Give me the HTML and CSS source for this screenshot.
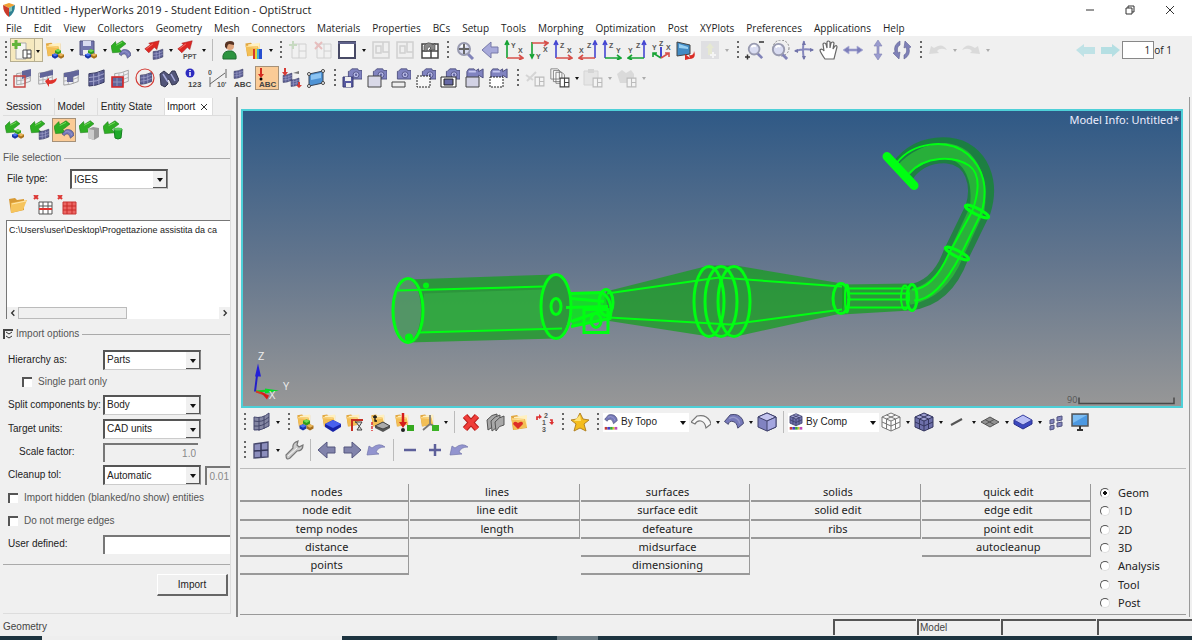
FILE: index.html
```html
<!DOCTYPE html>
<html lang="en">
<head>
<meta charset="utf-8">
<title>Untitled - HyperWorks 2019 - Student Edition - OptiStruct</title>
<link rel="stylesheet" href="styles.css">
</head>
<body>
<svg class="sprite" aria-hidden="true">
  <!-- shared parts -->
  <symbol id="p-folder" viewBox="0 0 20 20"><path d="M1 4l6-1 2 2 8-1v12L3 18z" fill="#e0a640"/><path d="M4 5l13-2v12L4 17z" fill="#fff0c0"/><path d="M1 6l14 1 2 8-13 3z" fill="#f3bf55"/><path d="M2 7l12 1" stroke="#ffe19a"/></symbol>
  <symbol id="p-cubes" viewBox="0 0 20 20"><path d="M10 2l5 2v4l-5 3-5-3V4z" fill="#2c9a20"/><path d="M10 2l5 2-5 3-5-3z" fill="#6fdc4f"/><path d="M5 9l5 2v4l-5 3-5-3v-4z" fill="#1834a8"/><path d="M5 9l5 2-5 3-5-3z" fill="#4c74f0"/><path d="M15 9l5 2v4l-5 3-5-3v-4z" fill="#a8701c"/><path d="M15 9l5 2-5 3-5-3z" fill="#e9b75c"/></symbol>
  <symbol id="p-mesh" viewBox="0 0 20 20"><path d="M2 6q7 0 16-4v13q-9 4-16 4z" fill="#5c5f95" stroke="#34365c"/><path d="M2 10q8 0 16-4M2 14.500q8 0 16-4M7 6v13M12.500 4.500v13" stroke="#a4a6ce" fill="none"/></symbol>
  <symbol id="p-wire" viewBox="0 0 20 20"><path d="M2 6q7 0 16-4v13q-9 4-16 4z" fill="#f0f0f4" stroke="#999"/><path d="M2 10q8 0 16-4M2 14.500q8 0 16-4M7 6v13M12.500 4.500v13" stroke="#aaa" fill="none"/></symbol>
  <symbol id="p-garrow" viewBox="0 0 20 20"><path d="M0 8l6-6 1 4 8-5 5 4-9 7 4 4-13 1z" fill="#2fae24" stroke="#1b7d16" stroke-width=".7"/><path d="M7 7l8-4" stroke="#8eea70"/></symbol>
  <symbol id="p-rarrow" viewBox="0 0 20 20"><path d="M1 11l7-5-2-2 13-3-3 11-3-3-7 7z" fill="#dd2622" stroke="#a81c1c" stroke-width=".7"/><path d="M3 11l8-6" stroke="#ff8a7c"/></symbol>
  <symbol id="p-surf" viewBox="0 0 20 20"><path d="M0 10L6 3q9-2 13 5l1 4-6 5q-1-6-5-7-4-1-5 3z" fill="#777aba" stroke="#42446e"/><path d="M5 7q4-3 8 0 3 2 3 5" fill="none" stroke="#9799cc" stroke-width="1.500"/></symbol>
  <symbol id="p-camera" viewBox="0 0 20 20"><path d="M5 4l3-3h7l1 2h4v10H4V4z" fill="#8083c0" stroke="#484a7a"/><circle cx="13" cy="8" r="3.500" fill="#b9bce8" stroke="#4b4d80"/><circle cx="13" cy="8" r="1.400" fill="#5f62a0"/></symbol>
  <symbol id="p-video" viewBox="0 0 20 20"><path d="M1 4l2-3h6l2 2 3-2v3l5-3v10l-5-3v3H1z" fill="#8083c0" stroke="#484a7a"/><path d="M3 4h8" stroke="#c5c7f0" stroke-width="2"/></symbol>
  <symbol id="p-pages" viewBox="0 0 20 20"><path d="M1 1h8l2 2v10H1zM4 3h7l3 3v10H4zM7 5h7l3 3v10H7z" fill="#fafafa" stroke="#777"/></symbol>
  <symbol id="p-win" viewBox="0 0 10 10"><path d="M1 1h8v8H1zM5 1v8M5 5h4" fill="#fff" stroke="#444" stroke-width="1"/></symbol>
  <symbol id="p-palette" viewBox="0 0 14 3"><path fill="#c43b35" d="M0 0h3v3H0z"/><path fill="#4540c5" d="M3 0h3v3H3z"/><path fill="#38a53a" d="M6 0h3v3H6z"/><path fill="#d5c629" d="M9 0h2v3H9z"/><path fill="#bf4bb8" d="M11 0h3v3h-3z"/></symbol>
  <symbol id="p-arrow" viewBox="0 0 20 20"><path d="M1 10l9-8v5h8v6h-8v5z" fill="#8183ab" stroke="#55577f"/></symbol>
  <symbol id="p-mag" viewBox="0 0 20 20"><path d="M12 13l6 6" stroke="#8183b8" stroke-width="3"/><circle cx="9" cy="9" r="6" fill="#d9dcf1" stroke="#999bb0" stroke-width="2"/><path d="M6 7q2-3 5-1" stroke="#fff" stroke-width="2" fill="none"/></symbol>
  <symbol id="p-cube" viewBox="0 0 20 20"><path d="M10 1l9 4v10l-9 4-9-4V5z" fill="#8183c1" stroke="#40426c"/><path d="M10 1l9 4-9 4-9-4z" fill="#c3c4ef" stroke="#40426c"/><path d="M10 9v10l9-4V5z" fill="#a4a6df" stroke="#40426c"/></symbol>

  <!-- main toolbar -->
  <symbol id="i-logo" viewBox="0 0 14 14"><path d="M7 0l6 2-6 3-6-3z" fill="#f0a133"/><path d="M1 2l6 3v9Q1 10 1 2z" fill="#cb3b2b"/><path d="M13 2L7 5v9q6-4 6-12z" fill="#2f8192"/><path d="M7 5l3-1.500V8L7 9z" fill="#88c5bd"/></symbol>
  <symbol id="i-new" viewBox="0 0 20 20"><path d="M4 3h10v16H4z" fill="#f6f6f2" stroke="#aaa"/><path d="M4 0v9M0 4.500h9" stroke="#62b43a" stroke-width="3"/><use href="#p-win" x="10" y="9" width="10" height="10"/></symbol>
  <symbol id="i-open" viewBox="0 0 20 20"><use href="#p-folder" width="18" height="18"/><use href="#p-cubes" x="6" y="8" width="14" height="12"/></symbol>
  <symbol id="i-save" viewBox="0 0 20 20"><path d="M2 1h14v14H2z" fill="#7275ac" stroke="#50527e"/><path d="M5 1h8v5H5z" fill="#d8daf0"/><path d="M5 10h8v5H5z" fill="#eee"/><use href="#p-cubes" x="6" y="8" width="14" height="12"/></symbol>
  <symbol id="i-import" viewBox="0 0 20 20"><use href="#p-garrow" width="15" height="15"/><use href="#p-surf" x="8" y="8" width="12" height="12"/></symbol>
  <symbol id="i-export" viewBox="0 0 20 20"><use href="#p-rarrow" width="16" height="16"/><use href="#p-mesh" x="8" y="8" width="12" height="12"/></symbol>
  <symbol id="i-ppt" viewBox="0 0 20 20"><use href="#p-rarrow" width="16" height="16"/><text x="6" y="19">PPT</text></symbol>
  <symbol id="i-user" viewBox="0 0 20 20"><path d="M4 19q-1-7 5-8h4q5 2 4 8z" fill="#2c9440" stroke="#1f6c30"/><circle cx="11" cy="6" r="4" fill="#dfa47c"/><path d="M6 7q-1-6 5-6 5 0 4 4l-5-1q-2 1-2 5z" fill="#573323"/></symbol>
  <symbol id="i-loads" viewBox="0 0 20 20"><use href="#p-folder" width="19" height="18"/><path d="M9 9h3v10H9z" fill="#d73929"/><path d="M11 9h3v10h-3z" fill="#e5d537"/><path d="M13 9h3v10h-3z" fill="#41b1d3"/><path d="M15 9h3v10h-3z" fill="#274ed0"/></symbol>
  <symbol id="i-addpage" viewBox="0 0 20 20"><path d="M4 4h14v14H4zM11 4v14M11 11h7" fill="#f5f5f5" stroke="#888"/><path d="M5 1v8M1 5h8" stroke="#6cab59" stroke-width="2"/></symbol>
  <symbol id="i-delpage" viewBox="0 0 20 20"><path d="M4 4h14v14H4zM11 4v14M11 11h7" fill="#f5f5f5" stroke="#888"/><path d="M2 2l7 7M9 2L2 9" stroke="#d34e4e" stroke-width="2"/></symbol>
  <symbol id="i-layout" viewBox="0 0 20 20"><path d="M2 2h16v16H2z" fill="#fff" stroke="#484a66" stroke-width="2"/><path d="M1 3h18" stroke="#5f628a" stroke-width="2"/></symbol>
  <symbol id="i-expand" viewBox="0 0 20 20"><path d="M2 2h16v16H2zM12 2v10h6M5 6h5v7H5z" fill="#eee" stroke="#888" stroke-width="1.500"/></symbol>
  <symbol id="i-swap" viewBox="0 0 20 20"><path d="M2 4h16v14H2zM2 11h16M11 4v14" fill="#fff" stroke="#444" stroke-width="1.500"/><path d="M4 11V6q4-6 9-1l2-2v7H9l2-2q-3-3-4 3z" fill="#888" stroke="#444" stroke-width=".6"/></symbol>
  <symbol id="i-fit" viewBox="0 0 20 20"><use href="#p-mag" width="20" height="20"/><path d="M9 4v10M4 9h10" stroke="#666" stroke-width="2"/></symbol>
  <symbol id="i-prev" viewBox="0 0 20 20"><path d="M2 10l9-8v5h7v6h-7v5z" fill="#a7a9da" stroke="#7779a8"/></symbol>
  <symbol id="i-xy" viewBox="0 0 20 20"><path d="M3 18V2M1 5l2-4 2 4" stroke="#16a334" stroke-width="1.600" fill="none"/><path d="M3 18h16M15 15l4 3-4 2" stroke="#d6504a" stroke-width="1.600" fill="none"/><text x="7" y="8">Y</text><text x="14" y="13">X</text></symbol>
  <symbol id="i-yx" viewBox="0 0 20 20"><path d="M3 2v16M1 14l2 4 2-4" stroke="#16a334" stroke-width="1.600" fill="none"/><path d="M3 3h16M15 1l4 2-4 3" stroke="#d6504a" stroke-width="1.600" fill="none"/><text x="14" y="12">X</text><text x="7" y="19">Y</text></symbol>
  <symbol id="i-zx" viewBox="0 0 20 20"><path d="M3 18V2M1 5l2-4 2 4" stroke="#4547d2" stroke-width="1.600" fill="none"/><path d="M3 18h16M15 15l4 3-4 2" stroke="#d6504a" stroke-width="1.600" fill="none"/><text x="7" y="8">Z</text><text x="14" y="13">X</text></symbol>
  <symbol id="i-xz" viewBox="0 0 20 20"><path d="M17 18V2M15 5l2-4 2 4" stroke="#4547d2" stroke-width="1.600" fill="none"/><path d="M17 18H1M5 15l-4 3 4 2" stroke="#d6504a" stroke-width="1.600" fill="none"/><text x="9" y="8">Z</text><text x="1" y="13">X</text></symbol>
  <symbol id="i-zy" viewBox="0 0 20 20"><path d="M3 18V2M1 5l2-4 2 4" stroke="#4547d2" stroke-width="1.600" fill="none"/><path d="M3 18h16M15 15l4 3-4 2" stroke="#16a334" stroke-width="1.600" fill="none"/><text x="7" y="8">Z</text><text x="14" y="13">Y</text></symbol>
  <symbol id="i-yz" viewBox="0 0 20 20"><path d="M17 18V2M15 5l2-4 2 4" stroke="#4547d2" stroke-width="1.600" fill="none"/><path d="M17 18H1M5 15l-4 3 4 2" stroke="#16a334" stroke-width="1.600" fill="none"/><text x="9" y="8">Z</text><text x="1" y="13">Y</text></symbol>
  <symbol id="i-iso" viewBox="0 0 20 20"><path d="M10 17V7" stroke="#4547d2" stroke-width="2"/><path d="M10 18l-8-5M2 17v-4h4" stroke="#16a334" stroke-width="1.600" fill="none"/><path d="M10 18l8-5M14 13h4v4" stroke="#d6504a" stroke-width="1.600" fill="none"/><text x="8" y="6">Z</text><text x="1" y="10">Y</text><text x="15" y="10">X</text></symbol>
  <symbol id="i-reverse" viewBox="0 0 20 20"><path d="M1 2l13 3v9L1 16z" fill="#438bc4" stroke="#444"/><path d="M3 4l9 3v2L3 8z" fill="#96cff2"/><path d="M9 14l5 4-1-3q5 1 5-4 3 8-5 8l-4 1z" fill="#da2c25"/></symbol>
  <symbol id="i-savedview" viewBox="0 0 20 20"><path d="M1 1h18v18H1z" fill="#b9b9c3"/><path d="M10 3l4 5h-2v7H8V8H6z" fill="#d0d98f"/><path d="M13 12v6M10 15h6" stroke="#fff" stroke-width="2"/></symbol>
  <symbol id="i-zoom" viewBox="0 0 20 20"><use href="#p-mag" x="1" width="18" height="20"/><path d="M0 17h5M2.500 14.500v5M14 2h5" stroke="#333" stroke-width="1.500"/></symbol>
  <symbol id="i-zoomsel" viewBox="0 0 20 20"><circle cx="11" cy="8" r="8" fill="none" stroke="#888" stroke-dasharray="2 1.500"/><use href="#p-mag" y="1" width="19" height="19"/></symbol>
  <symbol id="i-center" viewBox="0 0 20 20"><path d="M1 11q9-3 18-1M10 1q-2 9 0 18" stroke="#8688bd" stroke-width="2" fill="none"/><path d="M10 1l2 4H8zM10 20l-2-4h4zM0 11l4-2v4zM20 10l-4-2v4z" fill="#7173a8"/></symbol>
  <symbol id="i-pan" viewBox="0 0 20 20"><path d="M6 19q-5-7-5-9 2-2 4 1L4 4q1-2 3 0l1 4V2q1-2 3 0v6l1-5q2-2 3 0l-1 6 2-3q2-1 2 1l-3 12z" fill="#fff" stroke="#666" stroke-width="1.200"/></symbol>
  <symbol id="i-hmove" viewBox="0 0 20 20"><path d="M0 10l6-4v3h8V6l6 4-6 4v-3H6v3z" fill="#7c7eba" stroke="#aeb0d8" stroke-width=".8"/></symbol>
  <symbol id="i-vmove" viewBox="0 0 20 20"><path d="M10 0l4 6h-3v8h3l-4 6-4-6h3V6H6z" fill="#9a9ccf" stroke="#7f81b4" stroke-width=".6"/></symbol>
  <symbol id="i-spin" viewBox="0 0 20 20"><path d="M8 1Q1 5 3 12l-2 1 6 6 1-7-2 1Q4 7 8 5zM12 19q7-4 5-11l2-1-6-6-1 7 2-1q2 6-2 8z" fill="#7f81b8" stroke="#606292" stroke-width=".6"/></symbol>
  <symbol id="i-undo" viewBox="0 0 20 20"><path d="M1 14l2-8 3 2q8-6 13 2-7-3-10 1l2 2z" fill="#aaa"/></symbol>
  <symbol id="i-redo" viewBox="0 0 20 20"><path d="M19 14l-2-8-3 2Q6 2 1 10q7-3 10 1l-2 2z" fill="#aaa"/></symbol>
  <symbol id="i-pageprev" viewBox="0 0 20 20"><path d="M0 10l8-6v3h11v7H8v3z" fill="#bfe2e6"/></symbol>
  <symbol id="i-pagenext" viewBox="0 0 20 20"><path d="M20 10l-8-6v3H1v7h11v3z" fill="#b5dfe3"/></symbol>

  <!-- display toolbar -->
  <symbol id="i-mask" viewBox="0 0 20 20"><use href="#p-wire" x="3" width="17" height="18"/><path d="M10 3l9-2v7l-9 3z" fill="#62659a"/><path d="M2 8h11v11H2z" fill="none" stroke="#c84643" stroke-width="1.400"/></symbol>
  <symbol id="i-unmask" viewBox="0 0 20 20"><use href="#p-wire" width="17" height="17"/><path d="M3 5l13-3v5L3 10z" fill="#62659a"/><path d="M8 13l4 6v-3q7 0 8-6-5 3-8 2v-2z" fill="#df332c"/></symbol>
  <symbol id="i-maskadj" viewBox="0 0 20 20"><use href="#p-wire" x="1" width="18" height="18"/><path d="M3 5l15-3v5l-6 2v5H6V9L3 9z" fill="#62659a"/></symbol>
  <symbol id="i-maskall" viewBox="0 0 20 20"><use href="#p-mesh" x="1" width="19" height="19"/></symbol>
  <symbol id="i-maskout" viewBox="0 0 20 20"><use href="#p-wire" x="3" width="17" height="18"/><path d="M2 9h11v10H2z" fill="#62659a" stroke="#d92424" stroke-width="1.600"/><path d="M3 14h9M7 10v8" stroke="#9496bb"/></symbol>
  <symbol id="i-sphere" viewBox="0 0 20 20"><use href="#p-mesh" x="4" y="3" width="14" height="14"/><circle cx="10" cy="10" r="9" fill="none" stroke="#d43d36" stroke-width="1.200"/></symbol>
  <symbol id="i-find" viewBox="0 0 20 20"><path d="M1 6l4-3 5 4 3-4 3 0 4 9-3 4-4 1-3-6-2 1 1 4-3 3-4-2z" fill="#525579" stroke="#32344e"/><path d="M4 6l5 8M12 6l4 7" stroke="#a9adde" stroke-width="1.500"/></symbol>
  <symbol id="i-numbers" viewBox="0 0 20 20"><circle cx="6" cy="5" r="4.500" fill="#2e2cc0"/><path d="M6 2v1M6 4v4" stroke="#fff" stroke-width="1.500"/><text x="4" y="19" class="heavy">123</text></symbol>
  <symbol id="i-measure" viewBox="0 0 20 20"><path d="M2 16L17 5M2 9v10M18 1v9" stroke="#666"/><text x="9" y="19">10'</text><text x="0" y="7">0</text></symbol>
  <symbol id="i-labels" viewBox="0 0 20 20"><use href="#p-mesh" width="11" height="11"/><text x="1" y="19" class="heavy">ABC</text></symbol>
  <symbol id="i-loadlabel" viewBox="0 0 20 20"><path d="M4 0v8" stroke="#d52b20" stroke-width="2"/><path d="M1 6h6l-3 4z" fill="#d52b20"/><circle cx="4" cy="11" r="1.500"/><text x="2" y="19" class="heavy">ABC</text></symbol>
  <symbol id="i-connect" viewBox="0 0 20 20"><use href="#p-mesh" y="4" width="11" height="11"/><use href="#p-mesh" x="8" y="9" width="10" height="10"/><path d="M3 0v5M17 14v5" stroke="#d63b35" stroke-width="2"/><path d="M0 4h6L3 8zM14 17h6l-3 3z" fill="#d63b35"/><path d="M11 5l6-2v3z" fill="#777"/></symbol>
  <symbol id="i-patch" viewBox="0 0 20 20"><path d="M3 6l14-3v12L3 18z" fill="#4e93d5" stroke="#34445a"/><path d="M5 7l10-2v5L5 12z" fill="#8cc4f2"/><g fill="#fff" stroke="#444"><circle cx="3" cy="6" r="1.500"/><circle cx="17" cy="3" r="1.500"/><circle cx="17" cy="15" r="1.500"/><circle cx="3" cy="18" r="1.500"/></g></symbol>
  <symbol id="i-camsave" viewBox="0 0 20 20"><use href="#p-camera" x="3" width="17" height="17"/><path d="M1 9h10v10H1z" fill="#5659a0" stroke="#383a70"/><path d="M3 9h6v4H3zM4 15h5v4H4z" fill="#eee"/></symbol>
  <symbol id="i-camwin" viewBox="0 0 20 20"><use href="#p-camera" x="3" width="17" height="17"/><path d="M1 8h13v11H1z" fill="#d9d9e8" stroke="#444"/></symbol>
  <symbol id="i-cambar" viewBox="0 0 20 20"><use href="#p-camera" x="3" width="17" height="17"/><path d="M1 14h13v5H1z" fill="#eee" stroke="#444"/></symbol>
  <symbol id="i-camsel" viewBox="0 0 20 20"><use href="#p-camera" x="3" width="17" height="17"/><path d="M1 8h13v11H1z" fill="#f7f7f7" stroke="#222" stroke-dasharray="2 1"/></symbol>
  <symbol id="i-camscr" viewBox="0 0 20 20"><use href="#p-camera" x="3" width="17" height="17"/><path d="M1 9h15v10H1z" fill="#fff" stroke="#222"/><path d="M4 11h9v6H4z" fill="#6669a5" stroke="#222"/></symbol>
  <symbol id="i-vidwin" viewBox="0 0 20 20"><use href="#p-video" width="20" height="18"/><path d="M1 9h13v10H1z" fill="#d2d2e4" stroke="#444"/></symbol>
  <symbol id="i-vidsel" viewBox="0 0 20 20"><use href="#p-video" width="20" height="18"/><path d="M1 9h13v10H1z" fill="#fff" stroke="#222" stroke-dasharray="2 1"/></symbol>
  <symbol id="i-cut" viewBox="0 0 20 20"><path d="M1 7l7 5M2 13l9-9" stroke="#999" stroke-width="2"/><use href="#p-win" x="9" y="8" width="11" height="11"/></symbol>
  <symbol id="i-copy" viewBox="0 0 20 20"><use href="#p-pages" width="17" height="17"/><use href="#p-win" x="9" y="9" width="11" height="11"/></symbol>
  <symbol id="i-paste" viewBox="0 0 20 20"><path d="M1 3h14v14H1z" fill="#ccc" stroke="#999"/><path d="M5 1h6v4H5z" fill="#999"/><use href="#p-win" x="9" y="9" width="11" height="11"/></symbol>
  <symbol id="i-pastebox" viewBox="0 0 20 20"><path d="M0 6l5-4 4 3 5-3 3 4v9H3z" fill="#aaa"/><use href="#p-win" x="9" y="9" width="11" height="11"/></symbol>

  <!-- import panel -->
  <symbol id="i-impcubes" viewBox="0 0 20 20"><use href="#p-garrow" width="15" height="15"/><use href="#p-cubes" x="6" y="8" width="14" height="12"/></symbol>
  <symbol id="i-impmesh" viewBox="0 0 20 20"><use href="#p-garrow" width="15" height="15"/><use href="#p-mesh" x="8" y="8" width="12" height="12"/></symbol>
  <symbol id="i-impgeo" viewBox="0 0 20 20"><use href="#p-garrow" width="16" height="16"/><use href="#p-surf" x="8" y="8" width="12" height="12"/></symbol>
  <symbol id="i-impbox" viewBox="0 0 20 20"><use href="#p-garrow" width="15" height="15"/><path d="M9 9l5-2 6 1v9l-5 3-6-2z" fill="#999"/><path d="M9 9l6 1v10l-6-2z" fill="#ccc"/></symbol>
  <symbol id="i-impbin" viewBox="0 0 20 20"><use href="#p-garrow" width="16" height="16"/><path d="M11 9h8l-1 9q-3 2-6 0z" fill="#20aa2b" stroke="#158020"/><ellipse cx="15" cy="9" rx="4" ry="1.500" fill="#5acb5e"/></symbol>
  <symbol id="i-folder" viewBox="0 0 20 20"><path d="M1 4l6-1 2 2 7-1v11L3 18z" fill="#d89a34"/><path d="M3 8l16-3-4 10L3 18z" fill="#f6c45c"/><path d="M4 9l14-3" stroke="#ffe7ac"/></symbol>
  <symbol id="i-delrow" viewBox="0 0 20 20"><path d="M1 0l4 4M5 0L1 4" stroke="#dc3734" stroke-width="2"/><path d="M6 7h13v12H6zM6 11h13M10 7v12M15 7v12" fill="#fff" stroke="#555"/><path d="M6 14h13" stroke="#e23531" stroke-width="2"/></symbol>
  <symbol id="i-delall" viewBox="0 0 20 20"><path d="M1 0l4 4M5 0L1 4" stroke="#dc3734" stroke-width="2"/><path d="M6 7h13v12H6z" fill="#eb6663" stroke="#c63532"/><path d="M6 11h13M6 15h13M10 7v12M15 7v12" stroke="#c92b28"/></symbol>

  <!-- view toolbars -->
  <symbol id="i-meshview" viewBox="0 0 20 20"><path d="M3 5q8 2 15-4v13q-8 5-15 4z" fill="#8486a3" stroke="#45476e"/><path d="M3 9q8 2 15-4M3 14q8 1 15-5M8 5v14M13 4v13" stroke="#45476a" fill="none"/></symbol>
  <symbol id="i-comps" viewBox="0 0 20 20"><use href="#p-folder" width="17" height="16"/><use href="#p-cubes" x="1" y="6" width="19" height="14"/></symbol>
  <symbol id="i-comp" viewBox="0 0 20 20"><use href="#p-folder" width="17" height="16"/><path d="M4 12l8-4 8 4v3l-8 5-8-5z" fill="#1722a8"/><path d="M4 12l8-4 8 4-8 4z" fill="#4960ee"/></symbol>
  <symbol id="i-material" viewBox="0 0 20 20"><use href="#p-folder" width="17" height="16"/><path d="M7 19V8h11" stroke="#c62d22" stroke-width="2" fill="none"/><path d="M10 10h7l-5 8h5l-6-8z" fill="#ddd" stroke="#444"/></symbol>
  <symbol id="i-prop" viewBox="0 0 20 20"><use href="#p-folder" width="17" height="16"/><path d="M5 14l8-4 7 4v2l-7 4-8-4z" fill="#555"/><path d="M5 14l8-4 7 4-7 3z" fill="#aaa" stroke="#444"/><path d="M5 3v6h2M3 5h4" stroke="#111" stroke-width="1.300" fill="none"/><path d="M2 10v9" stroke="#d33" stroke-width="1.500" stroke-dasharray="3 1"/></symbol>
  <symbol id="i-load" viewBox="0 0 20 20"><use href="#p-folder" width="17" height="16"/><path d="M9 1v12" stroke="#d51d1b" stroke-width="2.500"/><path d="M5 10h8l-4 6z" fill="#d51d1b"/><path d="M13 13h7v6h-7z" fill="#35a91f"/><circle cx="9" cy="18" r="2" fill="#222"/></symbol>
  <symbol id="i-system" viewBox="0 0 20 20"><use href="#p-folder" width="17" height="16"/><path d="M11 3v9l-7 6M11 12l6 3" stroke="#777" stroke-width="1.700" fill="none"/><path d="M13 13h7v6h-7z" fill="#3cb326"/></symbol>
  <symbol id="i-delete" viewBox="0 0 20 20"><path d="M4 4l12 13M16 4L4 17" stroke="#b8201d" stroke-width="6"/><path d="M4 4l12 13M16 4L4 17" stroke="#ef3d39" stroke-width="4"/></symbol>
  <symbol id="i-cards" viewBox="0 0 20 20"><g fill="#a8a8a8" stroke="#555"><path d="M1 8q5-6 10-6v10l-9 6z"/><path d="M5 9q4-5 9-6v10l-8 6z"/><path d="M9 10q4-5 9-6v9q-5 0-8 6z"/></g></symbol>
  <symbol id="i-favfolder" viewBox="0 0 20 20"><use href="#p-folder" width="20" height="20"/><path d="M8 17l-5-5q1-4 5-1 5-3 5 1z" fill="#dd2e28"/></symbol>
  <symbol id="i-renumber" viewBox="0 0 20 20"><text x="9" y="6">2</text><text x="7" y="13">1</text><text x="7" y="20">3</text><path d="M2 8V5h3M15 8h2v3" stroke="#dc3030" stroke-width="1.700" fill="none"/><path d="M4 2l3 3-3 2zM14 10h5l-2 3z" fill="#dc3030"/></symbol>
  <symbol id="i-star" viewBox="0 0 20 20"><path d="M10 1l3 6 6 1-5 4 2 7-6-3-6 3 2-7-5-4 6-1z" fill="#f4bd1e" stroke="#b38324"/><path d="M10 3l1 6-7 0z" fill="#ffe375"/></symbol>
  <symbol id="i-topo" viewBox="0 0 16 20"><use href="#p-surf" width="16" height="14"/><use href="#p-palette" x="1" y="15" width="14" height="4"/></symbol>
  <symbol id="i-bycomp" viewBox="0 0 16 20"><use href="#i-solidcube" width="16" height="15"/><use href="#p-palette" x="1" y="15" width="14" height="4"/></symbol>
  <symbol id="i-wiresurf" viewBox="0 0 20 20"><path d="M0 10L6 4q9-2 13 5l1 3-5 4q-1-6-5-7-4-1-6 3z" fill="#f8f8f8" stroke="#777" stroke-width="1.200"/></symbol>
  <symbol id="i-surf" viewBox="0 0 20 20"><use href="#p-surf" width="20" height="19"/></symbol>
  <symbol id="i-cube" viewBox="0 0 20 20"><use href="#p-cube" width="20" height="20"/></symbol>
  <symbol id="i-wirecube" viewBox="0 0 20 20"><path d="M10 1l9 4v10l-9 4-9-4V5zM1 5l9 4 9-4M10 9v10M1 10l9 4 9-4M5.500 3l9 4v10M14.500 3l-9 4v10" fill="#fcfcfc" stroke="#777"/></symbol>
  <symbol id="i-solidcube" viewBox="0 0 20 20"><path d="M10 1l9 4v10l-9 4-9-4V5z" fill="#6e70aa"/><path d="M10 1l9 4-9 4-9-4z" fill="#9c9ed0"/><path d="M10 1l9 4v10l-9 4-9-4V5zM1 5l9 4 9-4M10 9v10M1 10l9 4 9-4M5.500 3l9 4v10M14.500 3l-9 4v10" fill="none" stroke="#34365f"/></symbol>
  <symbol id="i-line" viewBox="0 0 20 20"><path d="M4 13l11-6" stroke="#555" stroke-width="2"/></symbol>
  <symbol id="i-shell" viewBox="0 0 20 20"><path d="M1 10l9-5 9 5-9 5zM5 7.500l9 5M14 7.500l-9 5" fill="#909090" stroke="#555"/></symbol>
  <symbol id="i-slab" viewBox="0 0 20 20"><path d="M1 8v4l9 5 9-5V8" fill="#3b48c0" stroke="#282e8a"/><path d="M1 8l9-5 9 5-9 5z" fill="#b9bff6" stroke="#373fa0"/></symbol>
  <symbol id="i-shrink" viewBox="0 0 20 20"><g fill="#8486bd" stroke="#50527f"><path d="M4 8l4-1v4l-4 1zM11 5l5-1v4l-5 1zM4 14l4-1v4l-4 1zM11 11l5-1v4l-5 1z"/></g></symbol>
  <symbol id="i-monitor" viewBox="0 0 20 20"><path d="M2 2h16v12H2z" fill="#4c99e2" stroke="#555" stroke-width="1.500"/><path d="M3 3h14L3 11z" fill="#7cbdf3"/><path d="M10 14v4M7 18h6" stroke="#333" stroke-width="2"/></symbol>
  <symbol id="i-window" viewBox="0 0 20 20"><path d="M3 4l14-2v15L3 18z" fill="#8c8ebd" stroke="#45476b" stroke-width="1.300"/><path d="M10 3v14M3 11l14-1" stroke="#34365a" stroke-width="1.500"/></symbol>
  <symbol id="i-wrench" viewBox="0 0 20 20"><path d="M2 15l7-7q-1-5 5-7l-1 4 2 2 4-2q0 6-6 6l-7 7q-4 3-4-3z" fill="#ccc" stroke="#777" stroke-width="1.200"/><path d="M4 16l9-8" stroke="#f7f7f7"/></symbol>
  <symbol id="i-left" viewBox="0 0 20 20"><use href="#p-arrow" width="20" height="20"/></symbol>
  <symbol id="i-right" viewBox="0 0 20 20"><path d="M19 10l-9-8v5H2v6h8v5z" fill="#8183ab" stroke="#55577f"/></symbol>
  <symbol id="i-turn" viewBox="0 0 20 20"><path d="M1 15l2-9 3 2q7-6 13-1-7 0-9 5l3 2z" fill="#9294cf" stroke="#7375ab" stroke-width=".7"/></symbol>
  <symbol id="i-minus" viewBox="0 0 20 20"><path d="M4 10h12" stroke="#5d609a" stroke-width="2.500"/></symbol>
  <symbol id="i-plus" viewBox="0 0 20 20"><path d="M4 10h12M10 4v12" stroke="#5d609a" stroke-width="2.500"/></symbol>
</svg>

<header class="titlebar">
  <svg class="logo" aria-hidden="true"><use href="#i-logo"/></svg>
  <span class="title">Untitled - HyperWorks 2019 - Student Edition - OptiStruct</span>
  <div class="window-buttons">
    <button aria-label="Minimize"><svg viewBox="0 0 10 10"><path d="M1 5h8"/></svg></button>
    <button aria-label="Restore"><svg viewBox="0 0 10 10"><path d="M1 3h6v6H1zM3 3V1h6v6H7"/></svg></button>
    <button aria-label="Close"><svg viewBox="0 0 10 10"><path d="M1 1l8 8M9 1L1 9"/></svg></button>
  </div>
</header>

<nav class="menubar">
  <button>File</button><button>Edit</button><button>View</button><button>Collectors</button><button>Geometry</button><button>Mesh</button><button>Connectors</button><button>Materials</button><button>Properties</button><button>BCs</button><button>Setup</button><button>Tools</button><button>Morphing</button><button>Optimization</button><button>Post</button><button>XYPlots</button><button>Preferences</button><button>Applications</button><button>Help</button>
</nav>

<div class="toolbar">
  <i class="grip"></i>
  <div class="splits">
    <button class="tool drop lit" aria-label="New"><svg><use href="#i-new"/></svg></button>
    <button class="tool drop" aria-label="Open"><svg><use href="#i-open"/></svg></button>
    <button class="tool drop" aria-label="Save"><svg><use href="#i-save"/></svg></button>
    <button class="tool drop" aria-label="Import"><svg><use href="#i-import"/></svg></button>
    <button class="tool drop" aria-label="Export"><svg><use href="#i-export"/></svg></button>
    <button class="tool drop" aria-label="Publish"><svg><use href="#i-ppt"/></svg></button>
  </div>
  <i class="sep"></i>
  <div class="icons">
    <button class="tool" aria-label="User profile"><svg><use href="#i-user"/></svg></button>
    <button class="tool drop" aria-label="Load results"><svg><use href="#i-loads"/></svg></button>
  </div>
  <i class="grip"></i>
  <div class="icons">
    <button class="tool faded" aria-label="Add page"><svg><use href="#i-addpage"/></svg></button>
    <button class="tool faded" aria-label="Delete page"><svg><use href="#i-delpage"/></svg></button>
    <button class="tool drop" aria-label="Page layout"><svg><use href="#i-layout"/></svg></button>
    <button class="tool faded" aria-label="Expand window"><svg><use href="#i-expand"/></svg></button>
    <button class="tool faded" aria-label="Split window"><svg><use href="#i-expand"/></svg></button>
    <button class="tool" aria-label="Swap windows"><svg><use href="#i-swap"/></svg></button>
  </div>
  <i class="grip"></i>
  <div class="icons">
    <button class="tool" aria-label="Fit"><svg><use href="#i-fit"/></svg></button>
    <button class="tool" aria-label="Previous view"><svg><use href="#i-prev"/></svg></button>
    <button class="tool" aria-label="XY top view"><svg><use href="#i-xy"/></svg></button>
    <button class="tool" aria-label="XY bottom view"><svg><use href="#i-yx"/></svg></button>
    <button class="tool" aria-label="XZ front view"><svg><use href="#i-zx"/></svg></button>
    <button class="tool" aria-label="XZ rear view"><svg><use href="#i-xz"/></svg></button>
    <button class="tool" aria-label="YZ left view"><svg><use href="#i-zy"/></svg></button>
    <button class="tool" aria-label="YZ right view"><svg><use href="#i-yz"/></svg></button>
    <button class="tool" aria-label="Isometric view"><svg><use href="#i-iso"/></svg></button>
    <button class="tool" aria-label="Reverse view"><svg><use href="#i-reverse"/></svg></button>
    <button class="tool drop faded" aria-label="Saved views"><svg><use href="#i-savedview"/></svg></button>
  </div>
  <i class="grip"></i>
  <div class="icons">
    <button class="tool" aria-label="Zoom in or out"><svg><use href="#i-zoom"/></svg></button>
    <button class="tool" aria-label="Circle zoom"><svg><use href="#i-zoomsel"/></svg></button>
    <button class="tool" aria-label="Center"><svg><use href="#i-center"/></svg></button>
    <button class="tool" aria-label="Pan"><svg><use href="#i-pan"/></svg></button>
    <button class="tool" aria-label="Rotate horizontally"><svg><use href="#i-hmove"/></svg></button>
    <button class="tool" aria-label="Rotate vertically"><svg><use href="#i-vmove"/></svg></button>
    <button class="tool" aria-label="Spin"><svg><use href="#i-spin"/></svg></button>
  </div>
  <i class="grip"></i>
  <div class="splits">
    <button class="tool drop faded" aria-label="Undo"><svg><use href="#i-undo"/></svg></button>
    <button class="tool drop faded" aria-label="Redo"><svg><use href="#i-redo"/></svg></button>
  </div>
  <div class="pager">
    <button class="tool" aria-label="Previous page"><svg><use href="#i-pageprev"/></svg></button>
    <button class="tool" aria-label="Next page"><svg><use href="#i-pagenext"/></svg></button>
    <input id="page" value="1"><label for="page">of 1</label>
  </div>
</div>

<div class="toolbar">
  <i class="grip"></i>
  <div class="icons">
    <button class="tool" aria-label="Mask"><svg><use href="#i-mask"/></svg></button>
    <button class="tool" aria-label="Reverse mask"><svg><use href="#i-unmask"/></svg></button>
    <button class="tool" aria-label="Unmask adjacent"><svg><use href="#i-maskadj"/></svg></button>
    <button class="tool" aria-label="Unmask all"><svg><use href="#i-maskall"/></svg></button>
    <button class="tool" aria-label="Mask not shown"><svg><use href="#i-maskout"/></svg></button>
    <button class="tool" aria-label="Spherical clipping"><svg><use href="#i-sphere"/></svg></button>
    <button class="tool" aria-label="Find"><svg><use href="#i-find"/></svg></button>
    <button class="tool" aria-label="Numbers"><svg><use href="#i-numbers"/></svg></button>
    <button class="tool" aria-label="Measure"><svg><use href="#i-measure"/></svg></button>
    <button class="tool" aria-label="Element labels"><svg><use href="#i-labels"/></svg></button>
    <button class="tool on" aria-label="Load labels"><svg><use href="#i-loadlabel"/></svg></button>
    <button class="tool" aria-label="Connector display"><svg><use href="#i-connect"/></svg></button>
    <button class="tool" aria-label="Patch"><svg><use href="#i-patch"/></svg></button>
  </div>
  <i class="grip"></i>
  <div class="icons">
    <button class="tool" aria-label="Save image"><svg><use href="#i-camsave"/></svg></button>
    <button class="tool" aria-label="Capture window"><svg><use href="#i-camwin"/></svg></button>
    <button class="tool" aria-label="Capture panel"><svg><use href="#i-cambar"/></svg></button>
    <button class="tool" aria-label="Capture area"><svg><use href="#i-camsel"/></svg></button>
    <button class="tool" aria-label="Capture screen"><svg><use href="#i-camscr"/></svg></button>
    <button class="tool" aria-label="Record window"><svg><use href="#i-vidwin"/></svg></button>
    <button class="tool" aria-label="Record area"><svg><use href="#i-vidsel"/></svg></button>
  </div>
  <i class="grip"></i>
  <div class="icons">
    <button class="tool faded" aria-label="Cut"><svg><use href="#i-cut"/></svg></button>
    <button class="tool drop" aria-label="Copy"><svg><use href="#i-copy"/></svg></button>
    <button class="tool drop faded" aria-label="Paste"><svg><use href="#i-paste"/></svg></button>
    <button class="tool drop faded" aria-label="Overlay"><svg><use href="#i-pastebox"/></svg></button>
  </div>
</div>

<main class="workspace">
  <aside class="side">
    <div class="tabs">
      <button>Session</button><button>Model</button><button>Entity State</button><button class="active">Import <svg viewBox="0 0 8 8"><path d="M1 1l6 6M7 1L1 7"/></svg></button>
    </div>
    <div class="import">
      <div class="icons">
        <button class="tool" aria-label="Import model"><svg><use href="#i-impcubes"/></svg></button>
        <button class="tool" aria-label="Import solver deck"><svg><use href="#i-impmesh"/></svg></button>
        <button class="tool on" aria-label="Import geometry"><svg><use href="#i-impgeo"/></svg></button>
        <button class="tool" aria-label="Import connectors"><svg><use href="#i-impbox"/></svg></button>
        <button class="tool" aria-label="Import BOM"><svg><use href="#i-impbin"/></svg></button>
      </div>
      <h2 class="rule">File selection</h2>
      <div class="row file-type">
        <label for="ftype">File type:</label>
        <span class="combo"><select id="ftype"><option>IGES</option></select></span>
      </div>
      <div class="icons files">
        <button class="tool" aria-label="Browse"><svg><use href="#i-folder"/></svg></button>
        <button class="tool" aria-label="Remove file"><svg><use href="#i-delrow"/></svg></button>
        <button class="tool" aria-label="Remove all files"><svg><use href="#i-delall"/></svg></button>
      </div>
      <div class="filelist">
        <p>C:\Users\user\Desktop\Progettazione assistita da ca</p>
        <div class="scroll"><button aria-label="Scroll left"><svg viewBox="0 0 6 6"><path d="M4 1L2 3l2 2"/></svg></button><span class="track"><span class="thumb"></span></span><button aria-label="Scroll right"><svg viewBox="0 0 6 6"><path d="M2 1l2 2-2 2"/></svg></button></div>
      </div>
      <h2 class="rule"><button class="fold" aria-label="Collapse"><svg viewBox="0 0 8 8"><path d="M1 1l3 2 3-2M1 5l3 2 3-2"/></svg></button>Import options</h2>
      <div class="options">
        <div class="row tall"><label for="hier">Hierarchy as:</label><span class="combo"><select id="hier"><option>Parts</option></select></span></div>
        <div class="row check inset"><input type="checkbox" id="single"><label for="single">Single part only</label></div>
        <div class="row tall"><label for="split">Split components by:</label><span class="combo"><select id="split"><option>Body</option></select></span></div>
        <div class="row tall"><label for="units">Target units:</label><span class="combo"><select id="units"><option>CAD units</option></select></span></div>
        <div class="row"><label for="scale" class="sub">Scale factor:</label><input id="scale" class="field" value="1.0" disabled></div>
        <div class="row"><label for="tol">Cleanup tol:</label><span class="combo"><select id="tol"><option>Automatic</option></select></span><input class="field tolv" aria-label="Tolerance" value="0.01" disabled></div>
        <div class="row check"><input type="checkbox" id="hidden"><label for="hidden">Import hidden (blanked/no show) entities</label></div>
        <div class="row check"><input type="checkbox" id="merge"><label for="merge">Do not merge edges</label></div>
        <div class="row"><label for="user">User defined:</label><input id="user" class="field wide"></div>
      </div>
      <div class="actions"><button class="push">Import</button></div>
    </div>
  </aside>

  <section class="right">
    <div class="viewport">
      <svg class="scene" viewBox="243 111 938 294" role="img" aria-label="Exhaust pipe model">
        <g fill="#13a01c" fill-opacity=".72" stroke="none">
          <path d="M407 279L556 274Q571 282 570 306T558 338L408 342Q392 335 392 310T407 279z"/>
          <path d="M606 291L709 265H736L842 283Q848 297 841 313L736 336H709L606 320Q600 305 606 291z"/>
          <path d="M842 284L910 283V310L842 314z"/>
        </g>
        <path d="M902 171Q919 148 948 150C978 153 986 184 978 209L956 254Q942 293 909 297" fill="none" stroke="#12882b" stroke-opacity=".75" stroke-width="26"/>
        <path d="M902 171Q920 151 945 150C974 153 981 184 977 209L956 254Q941 291 909 297" fill="none" stroke="#2dc438" stroke-opacity=".7" stroke-width="15"/>
        <path d="M424 293L542 289V329L422 332z" fill="#3ab84a" fill-opacity=".45"/>
        <ellipse cx="407" cy="310" rx="14" ry="31" fill="#67947d" fill-opacity=".65"/>
        <path d="M570 294l34-3 6 26-38 9z" fill="#0be51c" fill-opacity=".85"/>
        <g fill="none" stroke="#00ff12" stroke-width="3">
          <ellipse cx="408" cy="310" rx="15" ry="32"/><ellipse cx="556" cy="306" rx="15" ry="32"/>
          <path d="M398 290L543 286M419 332L562 328" stroke-width="2"/>
          <ellipse cx="556" cy="306" rx="5" ry="8"/>
          <path d="M571 293L602 292Q614 300 610 318L571 326M571 298L604 301M566 307L608 306M571 321L600 311"/>
          <path d="M584 309h24v23h-24z"/><ellipse cx="596" cy="320" rx="5" ry="7"/><ellipse cx="606" cy="302" rx="7" ry="13"/>
          <ellipse cx="709" cy="301" rx="15" ry="35"/><ellipse cx="721" cy="301" rx="16" ry="35"/><ellipse cx="734" cy="301" rx="16" ry="35"/>
          <path d="M607 293L719 277 842 286M609 317L730 324 842 309" stroke-width="2"/>
          <ellipse cx="841" cy="298" rx="8" ry="15"/><ellipse cx="847" cy="298" rx="2" ry="14" stroke-width="2"/>
          <path d="M847 288H910M847 293H910M847 299H910M847 307H910" stroke-width="2"/>
          <ellipse cx="905" cy="297" rx="4" ry="12" stroke-width="2"/><ellipse cx="912" cy="297" rx="5" ry="13"/>
          <path d="M897 162C912 143 946 136 968 154 984 169 988 187 982 211L962 252C945 285 930 300 914 300M909 173C925 155 954 155 969 165 982 174 978 195 972 211L949 253Q933 289 912 289" stroke-width="2"/>
          <ellipse cx="977" cy="211" rx="13" ry="3" transform="rotate(27 977 211)"/><ellipse cx="957" cy="253" rx="13" ry="3" transform="rotate(27 957 253)"/>
          <path d="M887 156L914 185" stroke-width="9" stroke-linecap="round"/>
        </g>
        <g fill="#00f512"><circle cx="426" cy="285" r="3"/><circle cx="409" cy="337" r="4"/></g>
        <g stroke-width="2" fill="none"><path d="M255 391L257 375" stroke="#2420c8"/><path d="M256 391L268 390" stroke="#0bd221"/><path d="M256 391L265 394" stroke="#d23a26"/></g>
        <path d="M255 376l3-13 3 13z" fill="#2420d8"/><path d="M265 388l14 2-14 3z" fill="#07d92a"/><path d="M260 391l9 4-2 4z" fill="#d61c18"/>
        <g class="axis"><text x="258" y="359">Z</text><text x="283" y="389">Y</text><text x="269" y="398">X</text></g>
        <path d="M1079 397v6H1174v-6" fill="none" stroke="#484848" stroke-width="1.500"/><text x="1067" y="402" class="scale">90</text>
      </svg>
      <p class="model-info">Model Info: Untitled*</p>
    </div>

    <div class="toolbar view">
      <i class="grip"></i>
      <div class="icons"><button class="tool drop" aria-label="Mesh"><svg><use href="#i-meshview"/></svg></button></div>
      <i class="grip"></i>
      <div class="icons">
        <button class="tool" aria-label="Assemblies"><svg><use href="#i-comps"/></svg></button>
        <button class="tool" aria-label="Components"><svg><use href="#i-comp"/></svg></button>
        <button class="tool" aria-label="Materials"><svg><use href="#i-material"/></svg></button>
        <button class="tool" aria-label="Properties"><svg><use href="#i-prop"/></svg></button>
        <button class="tool" aria-label="Load collectors"><svg><use href="#i-load"/></svg></button>
        <button class="tool drop" aria-label="System collectors"><svg><use href="#i-system"/></svg></button>
      </div>
      <i class="sep"></i>
      <div class="icons">
        <button class="tool" aria-label="Delete"><svg><use href="#i-delete"/></svg></button>
        <button class="tool" aria-label="Card edit"><svg><use href="#i-cards"/></svg></button>
        <button class="tool" aria-label="Organize"><svg><use href="#i-favfolder"/></svg></button>
        <button class="tool" aria-label="Renumber"><svg><use href="#i-renumber"/></svg></button>
      </div>
      <i class="grip"></i>
      <button class="tool" aria-label="Favorites"><svg><use href="#i-star"/></svg></button>
      <i class="grip"></i>
      <span class="mode"><svg aria-hidden="true"><use href="#i-topo"/></svg><select aria-label="Geometry color mode"><option>By Topo</option></select></span>
      <div class="splits">
        <button class="tool drop" aria-label="Wireframe geometry"><svg><use href="#i-wiresurf"/></svg></button>
        <button class="tool drop" aria-label="Shaded geometry"><svg><use href="#i-surf"/></svg></button>
        <button class="tool" aria-label="Transparency"><svg><use href="#i-cube"/></svg></button>
      </div>
      <i class="sep"></i>
      <span class="mode wide"><svg aria-hidden="true"><use href="#i-bycomp"/></svg><select aria-label="Element color mode"><option>By Comp</option></select></span>
      <div class="splits">
        <button class="tool drop" aria-label="Wireframe elements"><svg><use href="#i-wirecube"/></svg></button>
        <button class="tool drop" aria-label="Shaded elements"><svg><use href="#i-solidcube"/></svg></button>
        <button class="tool drop" aria-label="1D display"><svg><use href="#i-line"/></svg></button>
        <button class="tool drop" aria-label="2D display"><svg><use href="#i-shell"/></svg></button>
        <button class="tool drop" aria-label="3D display"><svg><use href="#i-slab"/></svg></button>
        <button class="tool" aria-label="Shrink"><svg><use href="#i-shrink"/></svg></button>
        <button class="tool" aria-label="Visualization options"><svg><use href="#i-monitor"/></svg></button>
      </div>
    </div>
    <div class="toolbar view last">
      <i class="grip"></i>
      <div class="splits">
        <button class="tool drop" aria-label="Window layout"><svg><use href="#i-window"/></svg></button>
        <button class="tool" aria-label="Options"><svg><use href="#i-wrench"/></svg></button>
      </div>
      <i class="sep"></i>
      <div class="icons">
        <button class="tool" aria-label="Back"><svg><use href="#i-left"/></svg></button>
        <button class="tool" aria-label="Forward"><svg><use href="#i-right"/></svg></button>
        <button class="tool" aria-label="Return"><svg><use href="#i-turn"/></svg></button>
      </div>
      <i class="sep"></i>
      <div class="icons">
        <button class="tool" aria-label="Less"><svg><use href="#i-minus"/></svg></button>
        <button class="tool" aria-label="More"><svg><use href="#i-plus"/></svg></button>
        <button class="tool" aria-label="Reset"><svg><use href="#i-turn"/></svg></button>
      </div>
    </div>

    <div class="panel">
      <div class="commands">
        <div><button>nodes</button><button>node edit</button><button>temp nodes</button><button>distance</button><button>points</button></div>
        <div><button>lines</button><button>line edit</button><button>length</button></div>
        <div><button>surfaces</button><button>surface edit</button><button>defeature</button><button>midsurface</button><button>dimensioning</button></div>
        <div><button>solids</button><button>solid edit</button><button>ribs</button></div>
        <div><button>quick edit</button><button>edge edit</button><button>point edit</button><button>autocleanup</button></div>
      </div>
      <div class="pages">
        <label><input type="radio" name="pg" checked>Geom</label>
        <label><input type="radio" name="pg">1D</label>
        <label><input type="radio" name="pg">2D</label>
        <label><input type="radio" name="pg">3D</label>
        <label><input type="radio" name="pg">Analysis</label>
        <label><input type="radio" name="pg">Tool</label>
        <label><input type="radio" name="pg">Post</label>
      </div>
    </div>
  </section>
</main>

<footer class="status">
  <span class="message">Geometry</span>
  <span class="cell"></span><span class="cell">Model</span><span class="cell"></span><span class="cell"></span>
</footer>
<div class="taskbar"><i class="search"></i><i class="task"></i></div>
</body>
</html>
```
FILE: styles.css
```css
* { box-sizing: border-box; }
body { margin: 0; min-height: 100vh; display: flex; flex-direction: column; background: #f0f0f0; color: #222; font: 10px/12px "Liberation Sans", Arial, sans-serif; overflow: hidden; }
button, input, select { font: inherit; color: inherit; margin: 0; padding: 0; border: 0; background: none; border-radius: 0; }
p, h2 { margin: 0; font: inherit; }
.sprite { display: none; }
symbol { overflow: visible; }
symbol text { font: bold 7px "Liberation Sans", Arial, sans-serif; fill: #555; }
symbol text.heavy { font-size: 8px; fill: #444; }

.titlebar { display: flex; align-items: center; height: 20px; padding-left: 2px; background: #fff; font: 11px/16px "Open Sans", sans-serif; }
.logo { width: 14px; height: 14px; margin-right: 4px; }
.window-buttons { display: flex; gap: 30px; margin-left: auto; padding-right: 17px; }
.window-buttons svg { display: block; width: 10px; height: 10px; fill: none; stroke: #333; }

.menubar { display: flex; gap: 12px; height: 16px; padding-left: 6px; background: #fff; font: 10px/16px "Open Sans", sans-serif; }

.toolbar { display: flex; align-items: center; height: 28px; padding-left: 1px; flex: none; }
.icons, .splits { display: flex; }
.icons > :nth-child(odd) { margin-right: 1px; }
.tool { position: relative; display: flex; align-items: center; justify-content: center; width: 24px; height: 24px; flex: none; }
.tool svg { width: 20px; height: 20px; flex: none; }
.tool.drop { width: 33px; padding-right: 9px; }
.tool.drop::after, .mode::after { content: ""; position: absolute; right: 2px; top: 11px; border: 2px solid transparent; border-top: 3px solid #111; border-bottom: 0; }
.tool.lit { background: linear-gradient(90deg, #f6e9be 23px, #b6ae91 23px 24px, #f7ecc9 24px); border: 1px solid #b6ae91; }
.tool.on { background: #fbcb96; border: 1px solid #a69178; }
.faded { opacity: .3; }
.grip { width: 11px; height: 20px; flex: none; background: repeating-linear-gradient(#666 0 2px, transparent 2px 5px) center / 2px 18px no-repeat; }
.toolbar > .grip:first-child { width: 9px; }
.sep { width: 9px; height: 22px; flex: none; background: linear-gradient(#bbb, #bbb) center / 1px 22px no-repeat; }
.pager { display: flex; align-items: center; margin-left: auto; padding-right: 20px; font: 10px/12px "Open Sans", sans-serif; }
.pager input { width: 32px; height: 18px; border: 1px solid #888; background: #fff; text-align: right; padding-right: 3px; }

.workspace { display: flex; flex: 1; padding-top: 5px; }
.side { display: flex; flex-direction: column; width: 238px; padding: 1px 5px 3px 3px; border-right: 2px solid #888; flex: none; }
.tabs { display: flex; height: 17px; }
.tabs button { padding: 0 12px 0 3px; border-right: 1px solid #ddd; white-space: nowrap; }
.tabs .active { display: flex; align-items: center; gap: 5px; background: #fff; padding: 0 4px 0 2px; }
.tabs svg { width: 8px; height: 8px; stroke: #333; fill: none; }
.import { display: flex; flex-direction: column; flex: 1; width: 228px; border: 1px solid #ddd; border-left: 0; padding-top: 2px; overflow: hidden; }
.rule { display: flex; align-items: center; gap: 3px; height: 14px; color: #555; }
.rule::after { content: ""; flex: 1; border-top: 1px solid #aaa; }
.import > .icons { height: 24px; }
.import > .icons + .rule { margin-top: 9px; }
.row { display: flex; align-items: center; height: 22px; padding-left: 4px; }
.row > label { width: 96px; flex: none; white-space: nowrap; }
.file-type { margin-top: 2px; height: 24px; }
.file-type > label { width: 63px; }
.files { margin: 2px 0; padding-left: 3px; }
.combo { position: relative; width: 98px; height: 20px; flex: none; border: solid; border-width: 2px 1px 1px 2px; border-color: #555 #888 #ccc #555; background: #fff; }
.combo select { appearance: none; width: 100%; height: 100%; padding-left: 2px; color: #222; }
.combo::after { content: ""; position: absolute; right: 4px; top: 7px; border: 3px solid transparent; border-top: 4px solid #111; border-bottom: 0; pointer-events: none; }
.combo::before { content: ""; position: absolute; right: 0; top: 0; bottom: 0; width: 13px; background: #f0f0f0; border: solid #555; border-width: 0 1px 1px 0; pointer-events: none; }
.filelist { display: flex; flex-direction: column; height: 99px; margin: 1px 0 8px 3px; border: solid #777; border-width: 1px 0 0 1px; background: #fff; }
.filelist p { padding: 3px 0 0 2px; font-size: 9px; white-space: nowrap; }
.scroll { display: flex; height: 12px; margin-top: auto; background: #f0f0f0; }
.scroll button { width: 11px; }
.scroll svg { display: block; width: 8px; height: 8px; margin: auto; fill: none; stroke: #333; }
.track { flex: 1; background: #fff; }
.thumb { display: block; width: 54%; height: 100%; background: #f0f0f0; border: 1px solid #bbb; }
.fold { width: 10px; height: 10px; border: solid #444; border-width: 2px 0 0 2px; }
.fold svg { display: block; width: 8px; height: 8px; fill: none; stroke: #333; }
.options { display: flex; flex-direction: column; gap: 1px; padding-top: 7px; }
.options .row { padding-left: 5px; }
.options .tall { height: 23px; }
.options .row > label { width: 95px; }
.options .row > .sub { padding-left: 11px; }
.options .inset { padding-left: 19px; height: 20px; }
.options .check > label { width: auto; margin-left: 6px; color: #555; }
.check input { appearance: none; width: 10px; height: 10px; background: #fff; border: solid #555; border-width: 2px 0 0 2px; }
.field { width: 95px; height: 19px; border: solid #777; border-width: 2px 0 0 2px; text-align: right; padding-right: 2px; color: #888; }
.tolv { width: 26px; margin-left: 4px; }
.field.wide { flex: 1; background: #fff; text-align: left; }
.actions { display: flex; justify-content: flex-end; margin-top: 9px; padding: 9px 2px 0 0; border-top: 1px solid #aaa; }
.push { width: 71px; height: 22px; border: solid; border-width: 1px 2px 2px 1px; border-color: #fff #666 #666 #fff; }

.right { display: flex; flex-direction: column; flex: 1; min-width: 0; padding: 12px 3px 2px 2px; margin-right: 2px; border-right: 1px solid #999; }
.viewport { position: relative; height: 298px; flex: 1 0 298px; margin: 0 3px 0 1px; border: 2px solid #4ed0d8; background: linear-gradient(#2f5986, #62758d 50%, #979797); }
.scene { position: absolute; inset: 0; width: 100%; height: 100%; }
.scene .axis { font: 11px "Open Sans", sans-serif; fill: #eee; }
.scene .scale { font: 9px "Open Sans", sans-serif; fill: #555; }
.model-info { position: absolute; top: 1px; right: 2px; color: #eef; font: 11px/16px "Noto Sans", sans-serif; }
.view { height: 28px; padding-left: 0; }
.view.last { height: 33px; padding-bottom: 5px; border-bottom: 1px solid #bbb; }
.mode { position: relative; display: flex; align-items: center; width: 86px; height: 19px; background: #fff; flex: none; }
.mode.wide { width: 91px; }
.mode svg { width: 16px; height: 18px; margin-right: 2px; }
.mode select { appearance: none; flex: 1; }
.mode::after { top: 8px; right: 3px; border-width: 4px 3px 0; pointer-events: none; }

.panel { display: flex; gap: 9px; min-height: 146px; padding: 15px 0 2px; border-bottom: 1px solid #999; font: 11px/16px "Noto Sans", sans-serif; }
.commands { display: grid; grid-template-columns: repeat(5, 1fr); gap: 1px; flex: 1; }
.commands div, .pages { display: grid; grid-template-rows: repeat(7, 1fr); }
.commands button { padding-left: 5px; border-bottom: 2px solid #999; border-right: 1px solid #999; }
.pages { width: 86px; }
.pages label { display: flex; align-items: center; gap: 8px; }
.pages input { appearance: none; width: 10px; height: 10px; border: 1px solid; border-color: #555 #ddd #ddd #555; border-radius: 50%; background: #fff; }
.pages input:checked { background: radial-gradient(circle, #111 2px, #fff 2px); }

.status { display: flex; align-items: center; gap: 1px; height: 19px; padding-left: 3px; color: #444; }
.message { flex: 1; }
.cell { width: 83px; height: 16px; padding: 1px 1px 0; border: solid #555; border-width: 2px 0 0 2px; }
.cell:nth-child(n+4) { width: 95px; }
.taskbar { display: flex; height: 4px; padding-left: 42px; background: #1d3440; }
.search { width: 300px; background: #eee; }
.task { width: 41px; margin-left: 215px; background: #6d7c84; }
```
